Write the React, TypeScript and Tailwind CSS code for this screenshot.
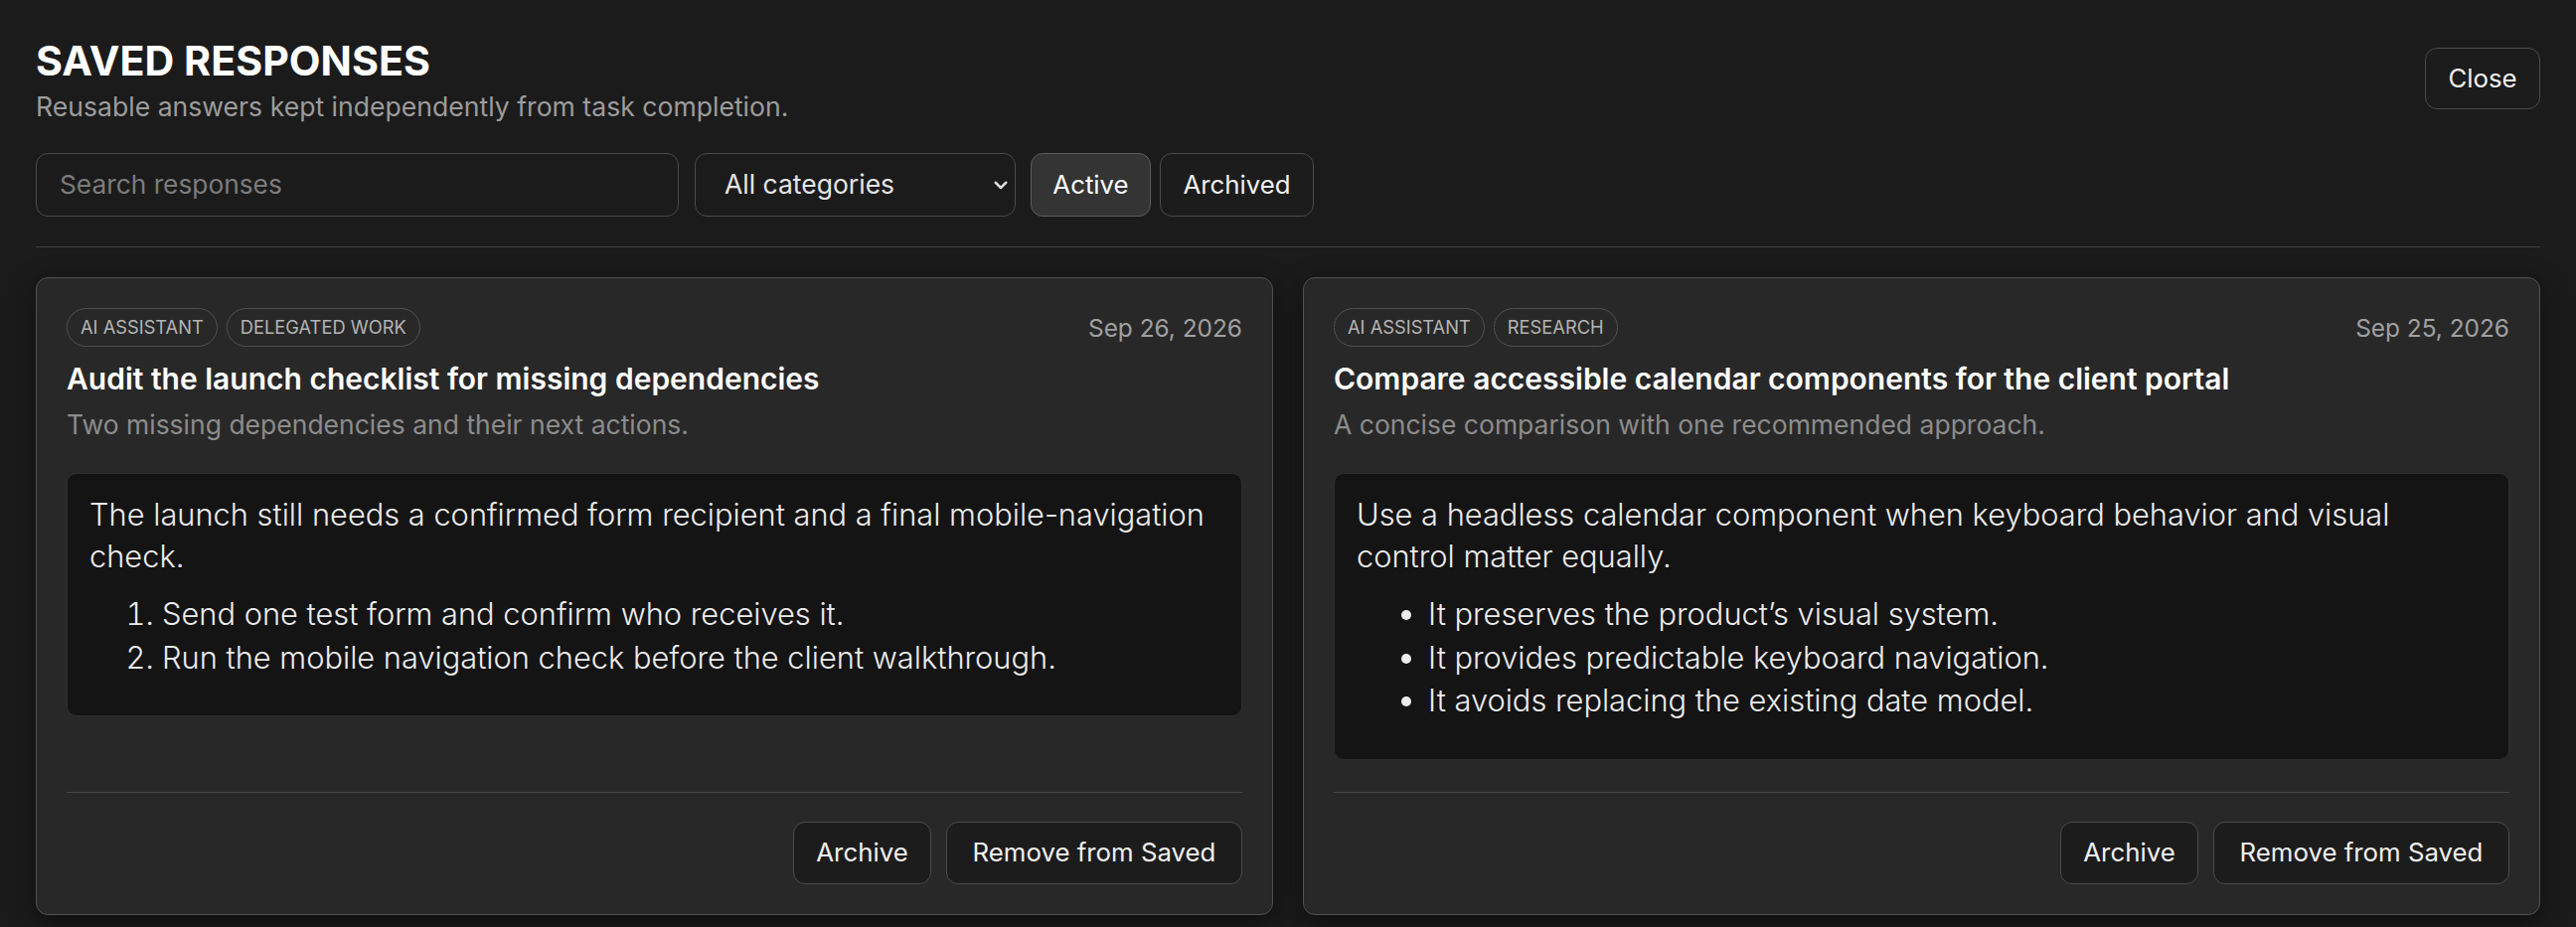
import React from "react";

const font = { fontFamily: "Inter, 'Noto Sans', sans-serif" };

function Chip({ children }: { children: React.ReactNode }) {
  return (
    <span className="inline-flex h-[39px] items-center rounded-full border border-[#505050] px-[13px] text-[18.3px] uppercase leading-[37px] text-[#b4b4b4]">
      {children}
    </span>
  );
}

function FooterButton({ children, w }: { children: React.ReactNode; w: string }) {
  return (
    <button
      className={`${w} h-[63px] rounded-[12px] border border-[#4b4b4b] bg-[#1c1c1c] text-[25.8px] leading-[34px] text-[#f0f0f0]`}
    >
      {children}
    </button>
  );
}

function Card({
  chips,
  date,
  title,
  desc,
  children,
}: {
  chips: string[];
  date: string;
  title: string;
  desc: string;
  children: React.ReactNode;
}) {
  return (
    <div className="flex flex-col rounded-[12px] border border-[#505050] bg-[#282828] p-[30px] shadow-[0_8px_28px_rgba(0,0,0,0.45)]">
      <div className="flex-1">
        <div className="flex h-[39px] items-center justify-between">
          <div className="flex gap-[9px]">
            {chips.map((c) => (
              <Chip key={c}>{c}</Chip>
            ))}
          </div>
          <div className="text-[24.4px] leading-[34px] text-[#a0a0a0]">{date}</div>
        </div>
        <h2 className="mt-[13px] text-[30px] font-semibold leading-[38px] text-white">{title}</h2>
        <p className="mt-[10px] text-[26.5px] leading-[34px] text-[#8c8c8c]">{desc}</p>
        <div className="mt-[32px] rounded-[10px] border border-[#2e2e2e] bg-[#141414] pl-[22px] pr-[22px] pt-[20px] pb-[37px] text-[30.8px] font-light text-[#ececec]">
          {children}
        </div>
      </div>
      <div className="mt-[32px] flex justify-end gap-[15px] border-t border-[#454545] pt-[29px]">
        <FooterButton w="w-[139px]">Archive</FooterButton>
        <FooterButton w="w-[298px]">Remove from Saved</FooterButton>
      </div>
    </div>
  );
}

export default function App() {
  return (
    <div style={font} className="min-h-screen bg-[#1b1b1b] px-[36px] pt-[36px] pb-[13px]">
      <div className="flex items-start justify-between">
        <div>
          <h1 className="text-[41.2px] font-bold leading-[50px] tracking-normal text-white">SAVED RESPONSES</h1>
          <p className="mt-[4px] text-[26.6px] leading-[34px] text-[#9c9c9c]">
            Reusable answers kept independently from task completion.
          </p>
        </div>
        <button className="mt-[12px] h-[62px] w-[116px] rounded-[12px] border border-[#4b4b4b] bg-[#1c1c1c] text-[25.8px] leading-[34px] text-[#f0f0f0]">
          Close
        </button>
      </div>

      <div className="mt-[30px] flex h-[64px] items-stretch">
        <input
          placeholder="Search responses"
          className="w-[647px] rounded-[12px] border border-[#4b4b4b] bg-[#1b1b1b] pl-[23px] text-[26.3px] text-[#e5e5e5] placeholder:text-[#7c7c7c] outline-none"
        />
        <div className="relative ml-[16px] w-[323px]">
          <select
            className="h-full w-full appearance-none rounded-[12px] border border-[#4b4b4b] bg-[#1b1b1b] pl-[29px] text-[26.5px] text-[#e5e5e5] outline-none"
            defaultValue="all"
          >
            <option value="all">All categories</option>
            <option value="ai">AI Assistant</option>
            <option value="research">Research</option>
          </select>
          <svg
            className="pointer-events-none absolute right-[6px] top-1/2 h-[18px] w-[18px] -translate-y-1/2"
            viewBox="0 0 24 24"
            fill="none"
            stroke="#dcdcdc"
            strokeWidth="3.4"
            strokeLinecap="round"
            strokeLinejoin="round"
          >
            <polyline points="5 9 12 16 19 9" />
          </svg>
        </div>
        <button className="ml-[15px] w-[121px] rounded-[12px] border border-[#5c5c5c] bg-[#343434] text-[25.8px] text-white">
          Active
        </button>
        <button className="ml-[9px] w-[155px] rounded-[12px] border border-[#4b4b4b] bg-[#1c1c1c] text-[25.8px] text-[#f0f0f0]">
          Archived
        </button>
      </div>

      <div className="mt-[30px] h-px bg-[#404040]" />

      <div className="mt-[30px] grid grid-cols-2 gap-[30px]">
        <Card
          chips={["AI Assistant", "Delegated Work"]}
          date="Sep 26, 2026"
          title="Audit the launch checklist for missing dependencies"
          desc="Two missing dependencies and their next actions."
        >
          <p className="leading-[42px]">
            The launch still needs a confirmed form recipient and a final mobile-navigation check.
          </p>
          <ol className="mt-[15px] list-decimal pl-[73px] leading-[43.5px]">
            <li>Send one test form and confirm who receives it.</li>
            <li>Run the mobile navigation check before the client walkthrough.</li>
          </ol>
        </Card>
        <Card
          chips={["AI Assistant", "Research"]}
          date="Sep 25, 2026"
          title="Compare accessible calendar components for the client portal"
          desc="A concise comparison with one recommended approach."
        >
          <p className="leading-[42px]">
            Use a headless calendar component when keyboard behavior and visual control matter equally.
          </p>
          <ul className="mt-[15px] list-disc pl-[72px] leading-[43.5px]">
            <li>It preserves the product’s visual system.</li>
            <li>It provides predictable keyboard navigation.</li>
            <li>It avoids replacing the existing date model.</li>
          </ul>
        </Card>
      </div>
    </div>
  );
}
